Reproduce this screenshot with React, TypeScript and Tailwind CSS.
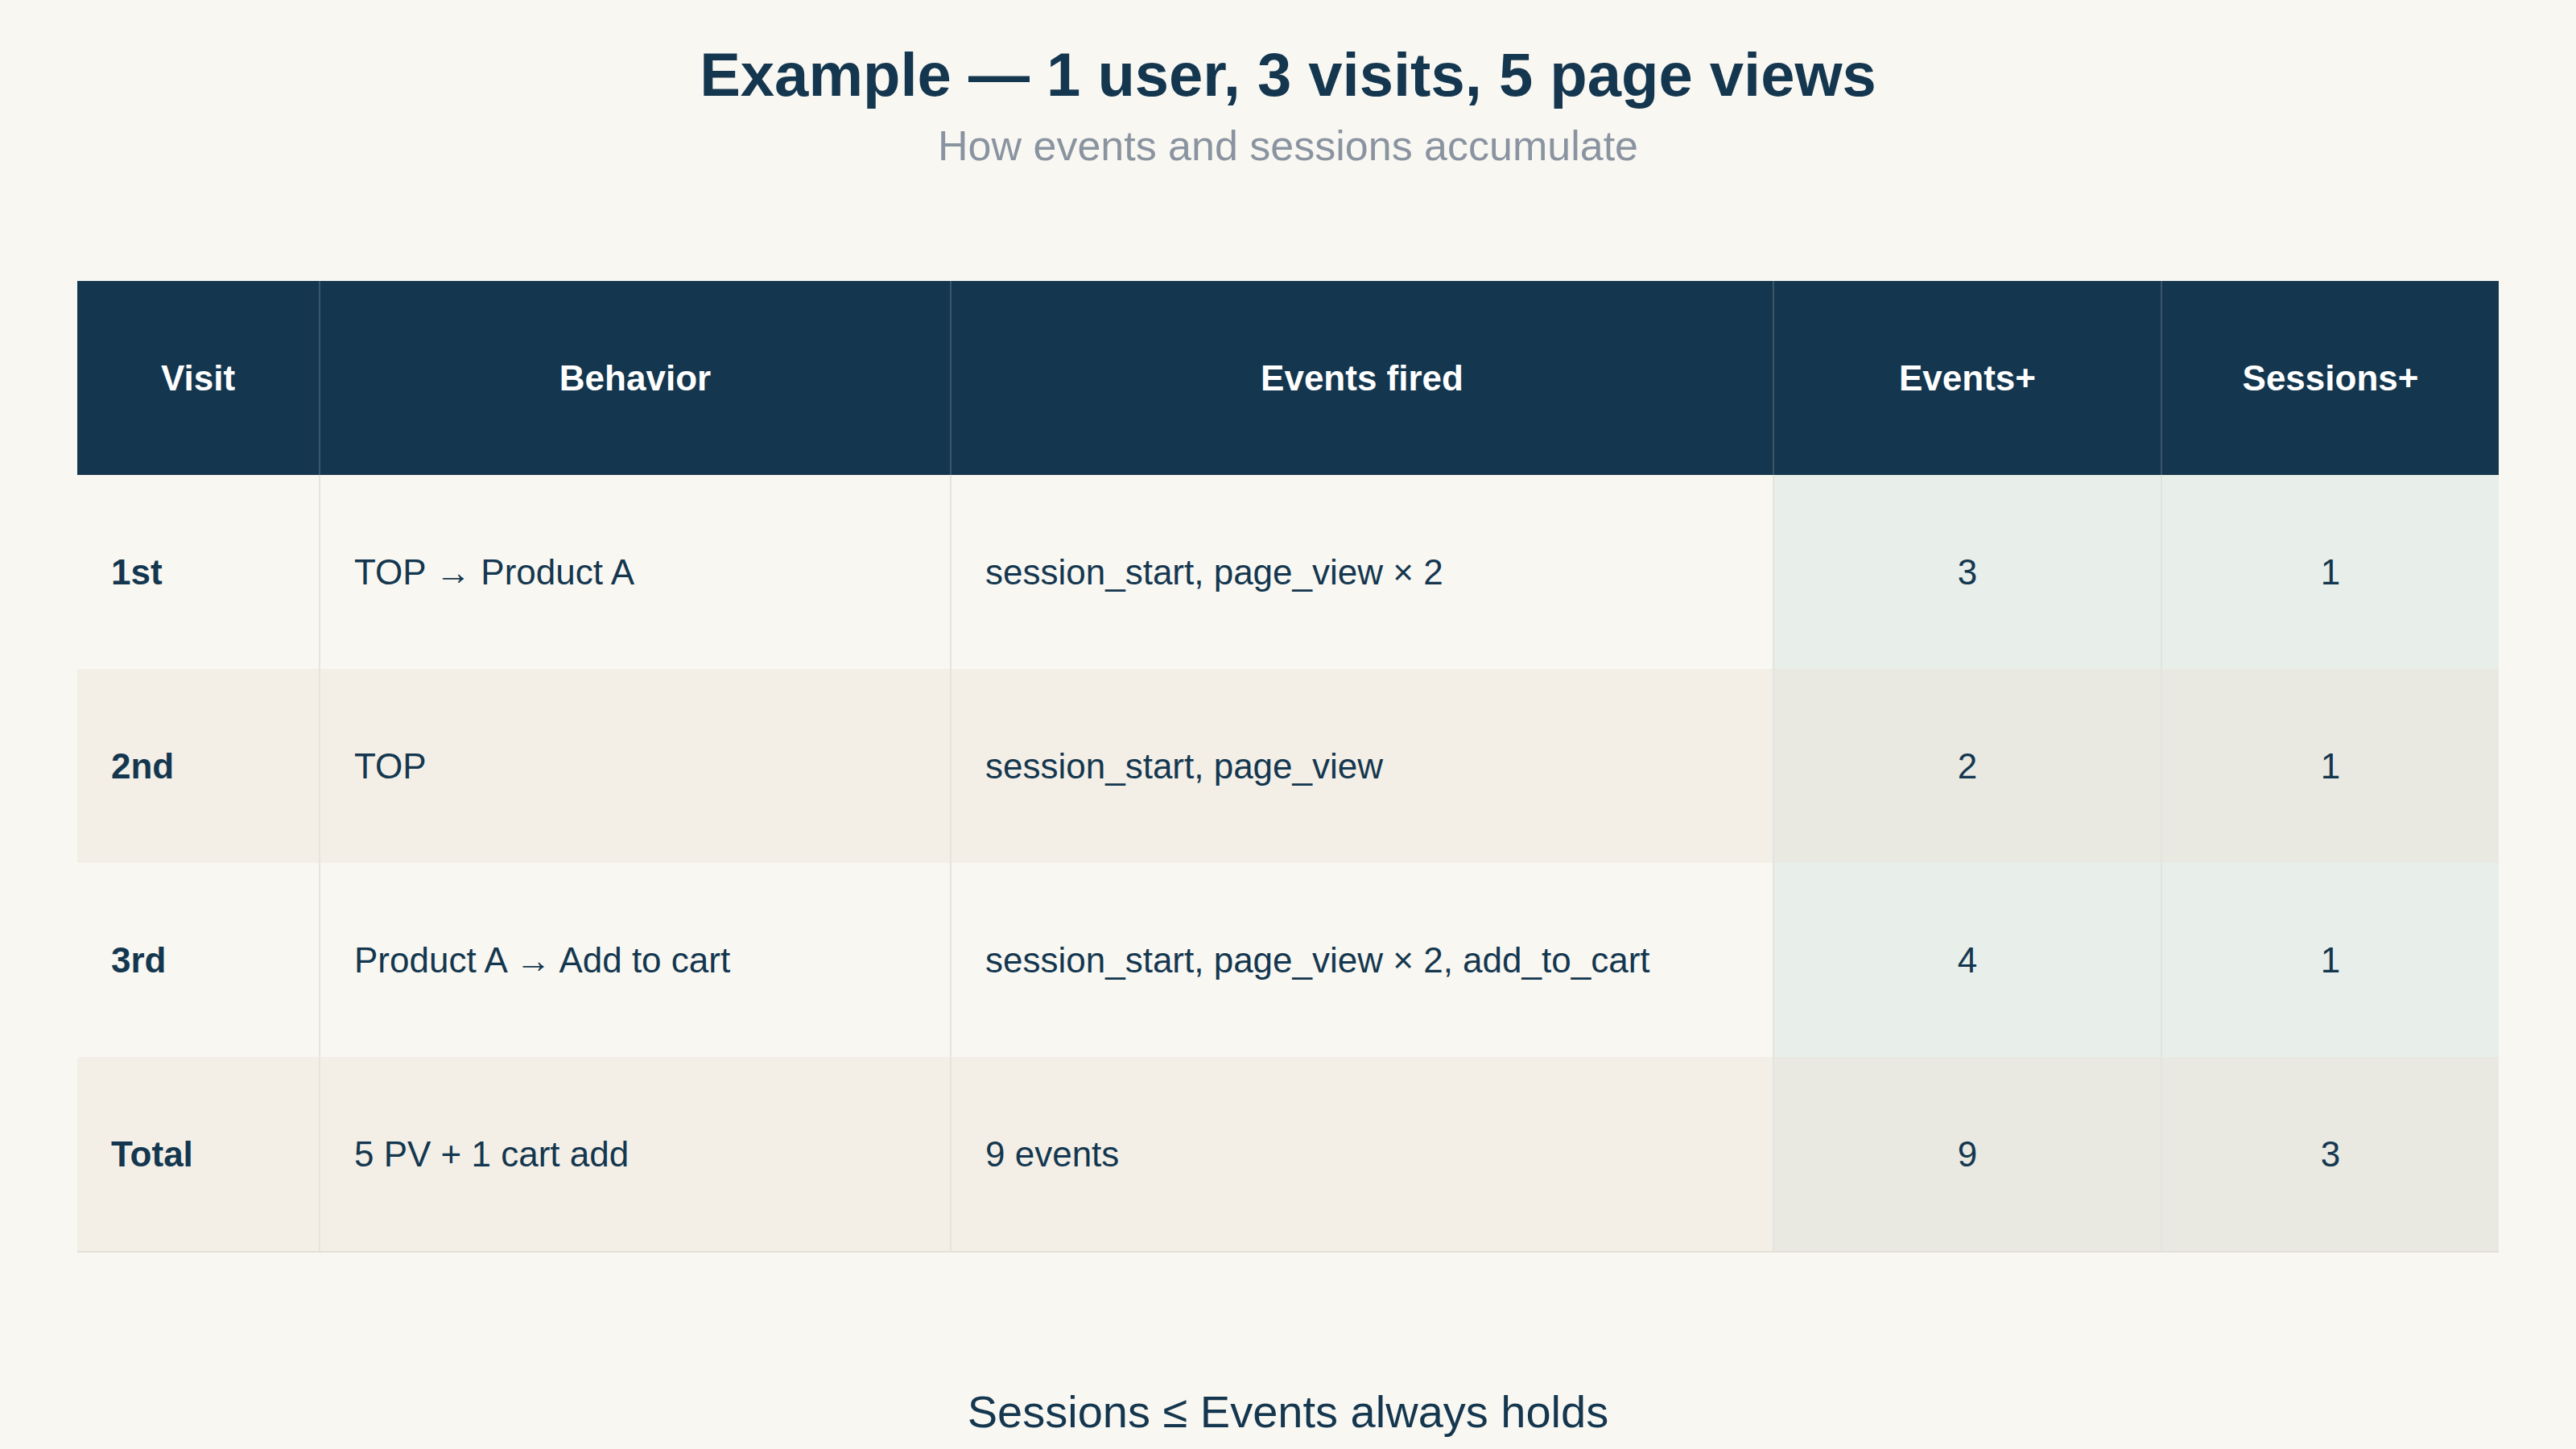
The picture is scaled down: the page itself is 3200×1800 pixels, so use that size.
export default function App() {
  const rows = [
    { v: "1st", b: "TOP → Product A", e: "session_start, page_view × 2", n: "3", s: "1", alt: false },
    { v: "2nd", b: "TOP", e: "session_start, page_view", n: "2", s: "1", alt: true },
    { v: "3rd", b: "Product A → Add to cart", e: "session_start, page_view × 2, add_to_cart", n: "4", s: "1", alt: false },
    { v: "Total", b: "5 PV + 1 cart add", e: "9 events", n: "9", s: "3", alt: true },
  ];
  return (
    <div className="w-[3200px] h-[1800px] bg-[#f9f7f2] text-[#14374f] flex flex-col items-center" style={{ fontFamily: '"Liberation Sans", Arial, sans-serif' }}>
      <h1 className="mt-[48px] h-[90px] flex items-center text-[76px] font-bold leading-none">Example — 1 user, 3 visits, 5 page views</h1>
      <div className="mt-[18px] h-[50px] flex items-center text-[52px] text-[#8a94a0] leading-none">How events and sessions accumulate</div>
      <div className="mt-[143px] w-[3008px] border-b-2 border-[#e4e0d8]">
        <div className="grid grid-cols-[300px_784px_1022px_482px_420px] h-[241px] bg-[#14374f] text-white text-[44px] font-bold">
          {["Visit", "Behavior", "Events fired", "Events+", "Sessions+"].map((h, i) => (
            <div key={h} className={`flex items-center justify-center ${i > 0 ? "border-l-2 border-[#3a566b]" : ""}`}>{h}</div>
          ))}
        </div>
        {rows.map((r) => (
          <div key={r.v} className={`grid grid-cols-[300px_784px_1022px_482px_420px] h-[241px] text-[44px] ${r.alt ? "bg-[#f3efe7]" : "bg-[#f9f7f2]"}`}>
            <div className="flex items-center pl-[42px] font-bold">{r.v}</div>
            <div className="flex items-center pl-[42px] border-l-2 border-[#e8e4dc]">{r.b}</div>
            <div className="flex items-center pl-[42px] border-l-2 border-[#e8e4dc]">{r.e}</div>
            <div className={`flex items-center justify-center border-l-2 border-[#e2e4de] ${r.alt ? "bg-[#e9e9e2]" : "bg-[#e8eee9]"}`}>{r.n}</div>
            <div className={`flex items-center justify-center border-l-2 border-[#e2e4de] ${r.alt ? "bg-[#e9e9e2]" : "bg-[#e8eee9]"}`}>{r.s}</div>
          </div>
        ))}
      </div>
      <div className="mt-[170px] text-[56px] leading-none">Sessions ≤ Events always holds</div>
    </div>
  );
}
